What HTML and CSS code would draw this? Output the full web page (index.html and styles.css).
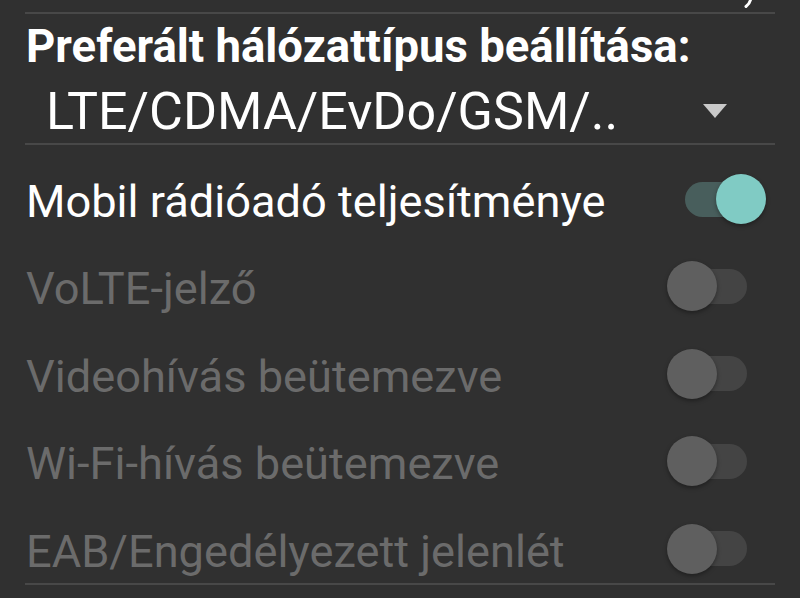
FILE: index.html
```html
<!DOCTYPE html>
<html lang="hu">
<head>
  <meta charset="UTF-8" />
  <title>Mobilhálózat beállításai</title>
  <meta name="viewport" content="width=device-width, initial-scale=1" />
  <link rel="stylesheet" href="styles.css">
</head>
<body>

  <div class="prev">
    <svg class="tail" width="12" height="8" viewBox="0 0 12 8">
      <path d="M9.5 0 Q8.5 4 5 6.5" fill="none" stroke="#fff" stroke-width="3" stroke-linecap="round" />
    </svg>
  </div>
  <div class="divider"></div>

  <h2 class="title">Preferált hálózattípus beállítása:</h2>
  <div class="spinner">
    <span>LTE/CDMA/EvDo/GSM/..</span>
    <span class="arrow"></span>
  </div>
  <div class="divider"></div>

  <ul class="prefs">
    <li class="pref">
      <span class="label">Mobil rádióadó teljesítménye</span>
      <span class="switch on"><span class="track"></span><span class="thumb"></span></span>
    </li>
    <li class="pref disabled">
      <span class="label">VoLTE-jelző</span>
      <span class="switch"><span class="track"></span><span class="thumb"></span></span>
    </li>
    <li class="pref disabled">
      <span class="label">Videohívás beütemezve</span>
      <span class="switch"><span class="track"></span><span class="thumb"></span></span>
    </li>
    <li class="pref disabled">
      <span class="label">Wi-Fi-hívás beütemezve</span>
      <span class="switch"><span class="track"></span><span class="thumb"></span></span>
    </li>
    <li class="pref disabled">
      <span class="label">EAB/Engedélyezett jelenlét</span>
      <span class="switch"><span class="track"></span><span class="thumb"></span></span>
    </li>
  </ul>
  <div class="divider"></div>

</body>
</html>
```

FILE: styles.css
```css
body {
  font-family: Roboto, "Noto Sans", sans-serif;
  margin: 0;
  background-color: #303030;
  color: #fff;
  overflow: hidden;
}

.prev {
  height: 12px;
  display: flex;
  justify-content: flex-end;
  padding-right: 47px;
}

.tail {
  display: block;
}

.divider {
  height: 2px;
  margin: 0 25px;
  background-color: #484848;
}

.title {
  margin: 0;
  padding: 6px 26px 0;
  font-size: 45.5px;
  font-weight: bold;
  line-height: normal;
}

.spinner {
  display: flex;
  align-items: center;
  justify-content: space-between;
  padding: 8px 73px 1px 46px;
  font-size: 52px;
  line-height: normal;
}

.arrow {
  width: 0;
  height: 0;
  border-left: 12px solid transparent;
  border-right: 12px solid transparent;
  border-top: 14px solid #c9c9c9;
  margin-bottom: 2px;
}

.prefs {
  list-style: none;
  margin: 0;
  padding: 29px 0 9.5px;
  display: flex;
  flex-direction: column;
  gap: 37.4px;
}

.pref {
  height: 50px;
  display: flex;
  align-items: center;
  justify-content: space-between;
  padding: 0 34px 0 26px;
}

.label {
  font-size: 45.2px;
  line-height: normal;
  padding-top: 5px;
}

.disabled .label {
  color: #6b6b6b;
}

.switch {
  position: relative;
  width: 99px;
  height: 50px;
}

.track {
  position: absolute;
  left: 18px;
  top: 7.5px;
  width: 62px;
  height: 35px;
  border-radius: 18px;
  background-color: #444;
}

.thumb {
  position: absolute;
  left: 0;
  top: 0;
  width: 50px;
  height: 50px;
  border-radius: 50%;
  background-color: #5f5f5f;
  box-shadow: 0 2px 4px rgba(0,0,0,0.35);
}

.switch.on .track {
  background-color: #485e5c;
}

.switch.on .thumb {
  left: 49px;
  background-color: #80cbc4;
}
```
